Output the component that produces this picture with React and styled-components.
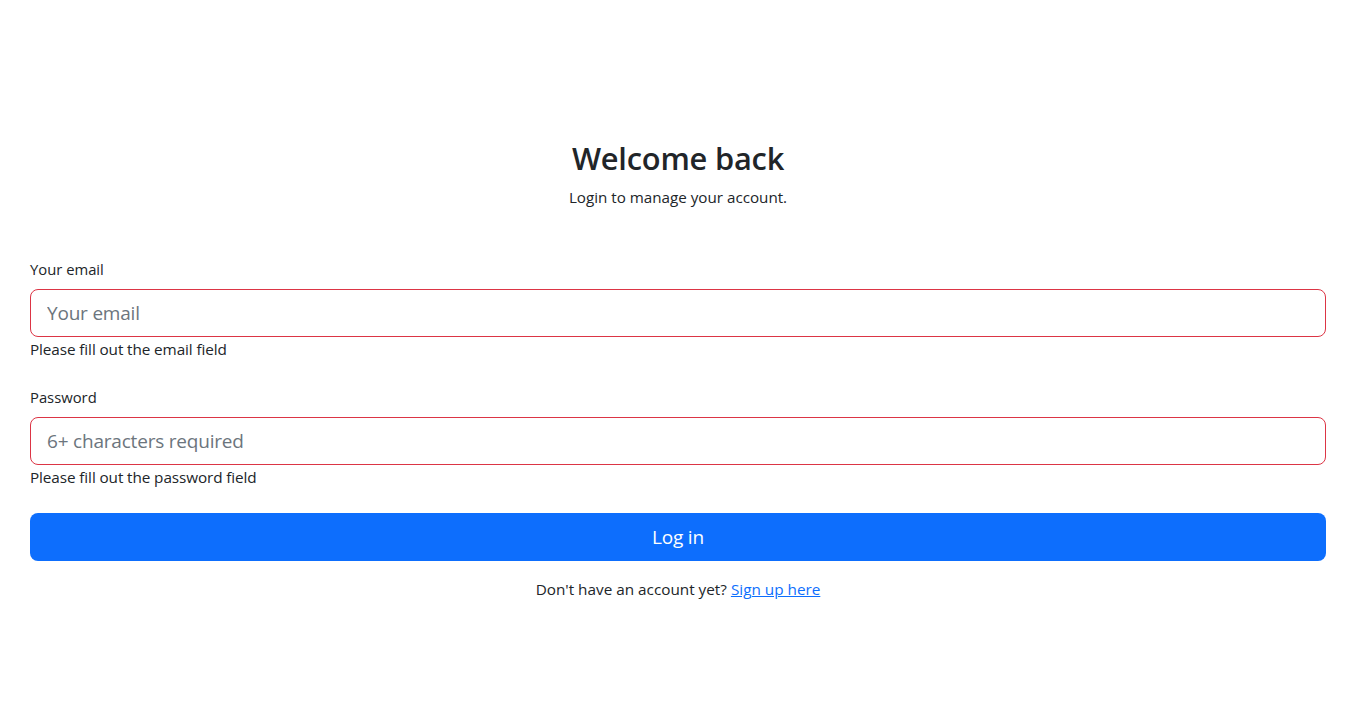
import React from "react";
import styled, { createGlobalStyle } from "styled-components";

const Global = createGlobalStyle`
  html, body { margin: 0; padding: 0; background: #fff; }
  body {
    font-family: "Open Sans", "Noto Sans", sans-serif;
    color: #212529;
    font-size: 15.3px;
    line-height: 24px;
  }
  * { box-sizing: border-box; }
`;

const Page = styled.main`
  padding: 139px 39px 0 30px;
`;

const Header = styled.header`
  text-align: center;
  margin-bottom: 48px;
`;

const Title = styled.h1`
  margin: 0 0 8px;
  font-size: 30.8px;
  line-height: 38px;
  font-weight: 600;
  letter-spacing: -0.2px;
`;

const Subtitle = styled.p`
  margin: 0;
  font-size: 15.2px;
  line-height: 24px;
`;

const Form = styled.form`
  display: flex;
  flex-direction: column;
`;

const Field = styled.div`
  display: flex;
  flex-direction: column;
  margin-bottom: 24px;
`;

const Label = styled.label`
  font-size: 14.8px;
  line-height: 25px;
  margin-bottom: 7px;
`;

const Input = styled.input`
  height: 48px;
  width: 100%;
  padding: 0 16px;
  font-family: inherit;
  font-size: 19px;
  color: #212529;
  border: 1px solid #dc3545;
  border-radius: 8px;
  outline: none;
  background: #fff;
  letter-spacing: -0.2px;
  &::placeholder { color: #6c757d; opacity: 1; }
`;

const Feedback = styled.div`
  font-size: 15.3px;
  line-height: 24px;
  letter-spacing: -0.1px;
`;

const Button = styled.button`
  height: 48px;
  width: 100%;
  border: none;
  border-radius: 8px;
  background: #0d6efd;
  color: #fff;
  font-family: inherit;
  font-size: 19px;
  cursor: pointer;
  letter-spacing: -0.2px;
`;

const Footer = styled.p`
  margin: 16px 0 0;
  text-align: center;
  font-size: 15.3px;
  line-height: 24px;
`;

const Link = styled.a`
  color: #0d6efd;
  text-decoration: underline;
`;

export default function App() {
  return (
    <>
      <Global />
      <Page>
        <Header>
          <Title>Welcome back</Title>
          <Subtitle>Login to manage your account.</Subtitle>
        </Header>
        <Form onSubmit={(e) => e.preventDefault()}>
          <Field>
            <Label htmlFor="email">Your email</Label>
            <Input id="email" type="email" placeholder="Your email" />
            <Feedback>Please fill out the email field</Feedback>
          </Field>
          <Field>
            <Label htmlFor="password">Password</Label>
            <Input id="password" type="password" placeholder="6+ characters required" />
            <Feedback>Please fill out the password field</Feedback>
          </Field>
          <Button type="submit">Log in</Button>
          <Footer>
            Don't have an account yet? <Link href="#">Sign up here</Link>
          </Footer>
        </Form>
      </Page>
    </>
  );
}
